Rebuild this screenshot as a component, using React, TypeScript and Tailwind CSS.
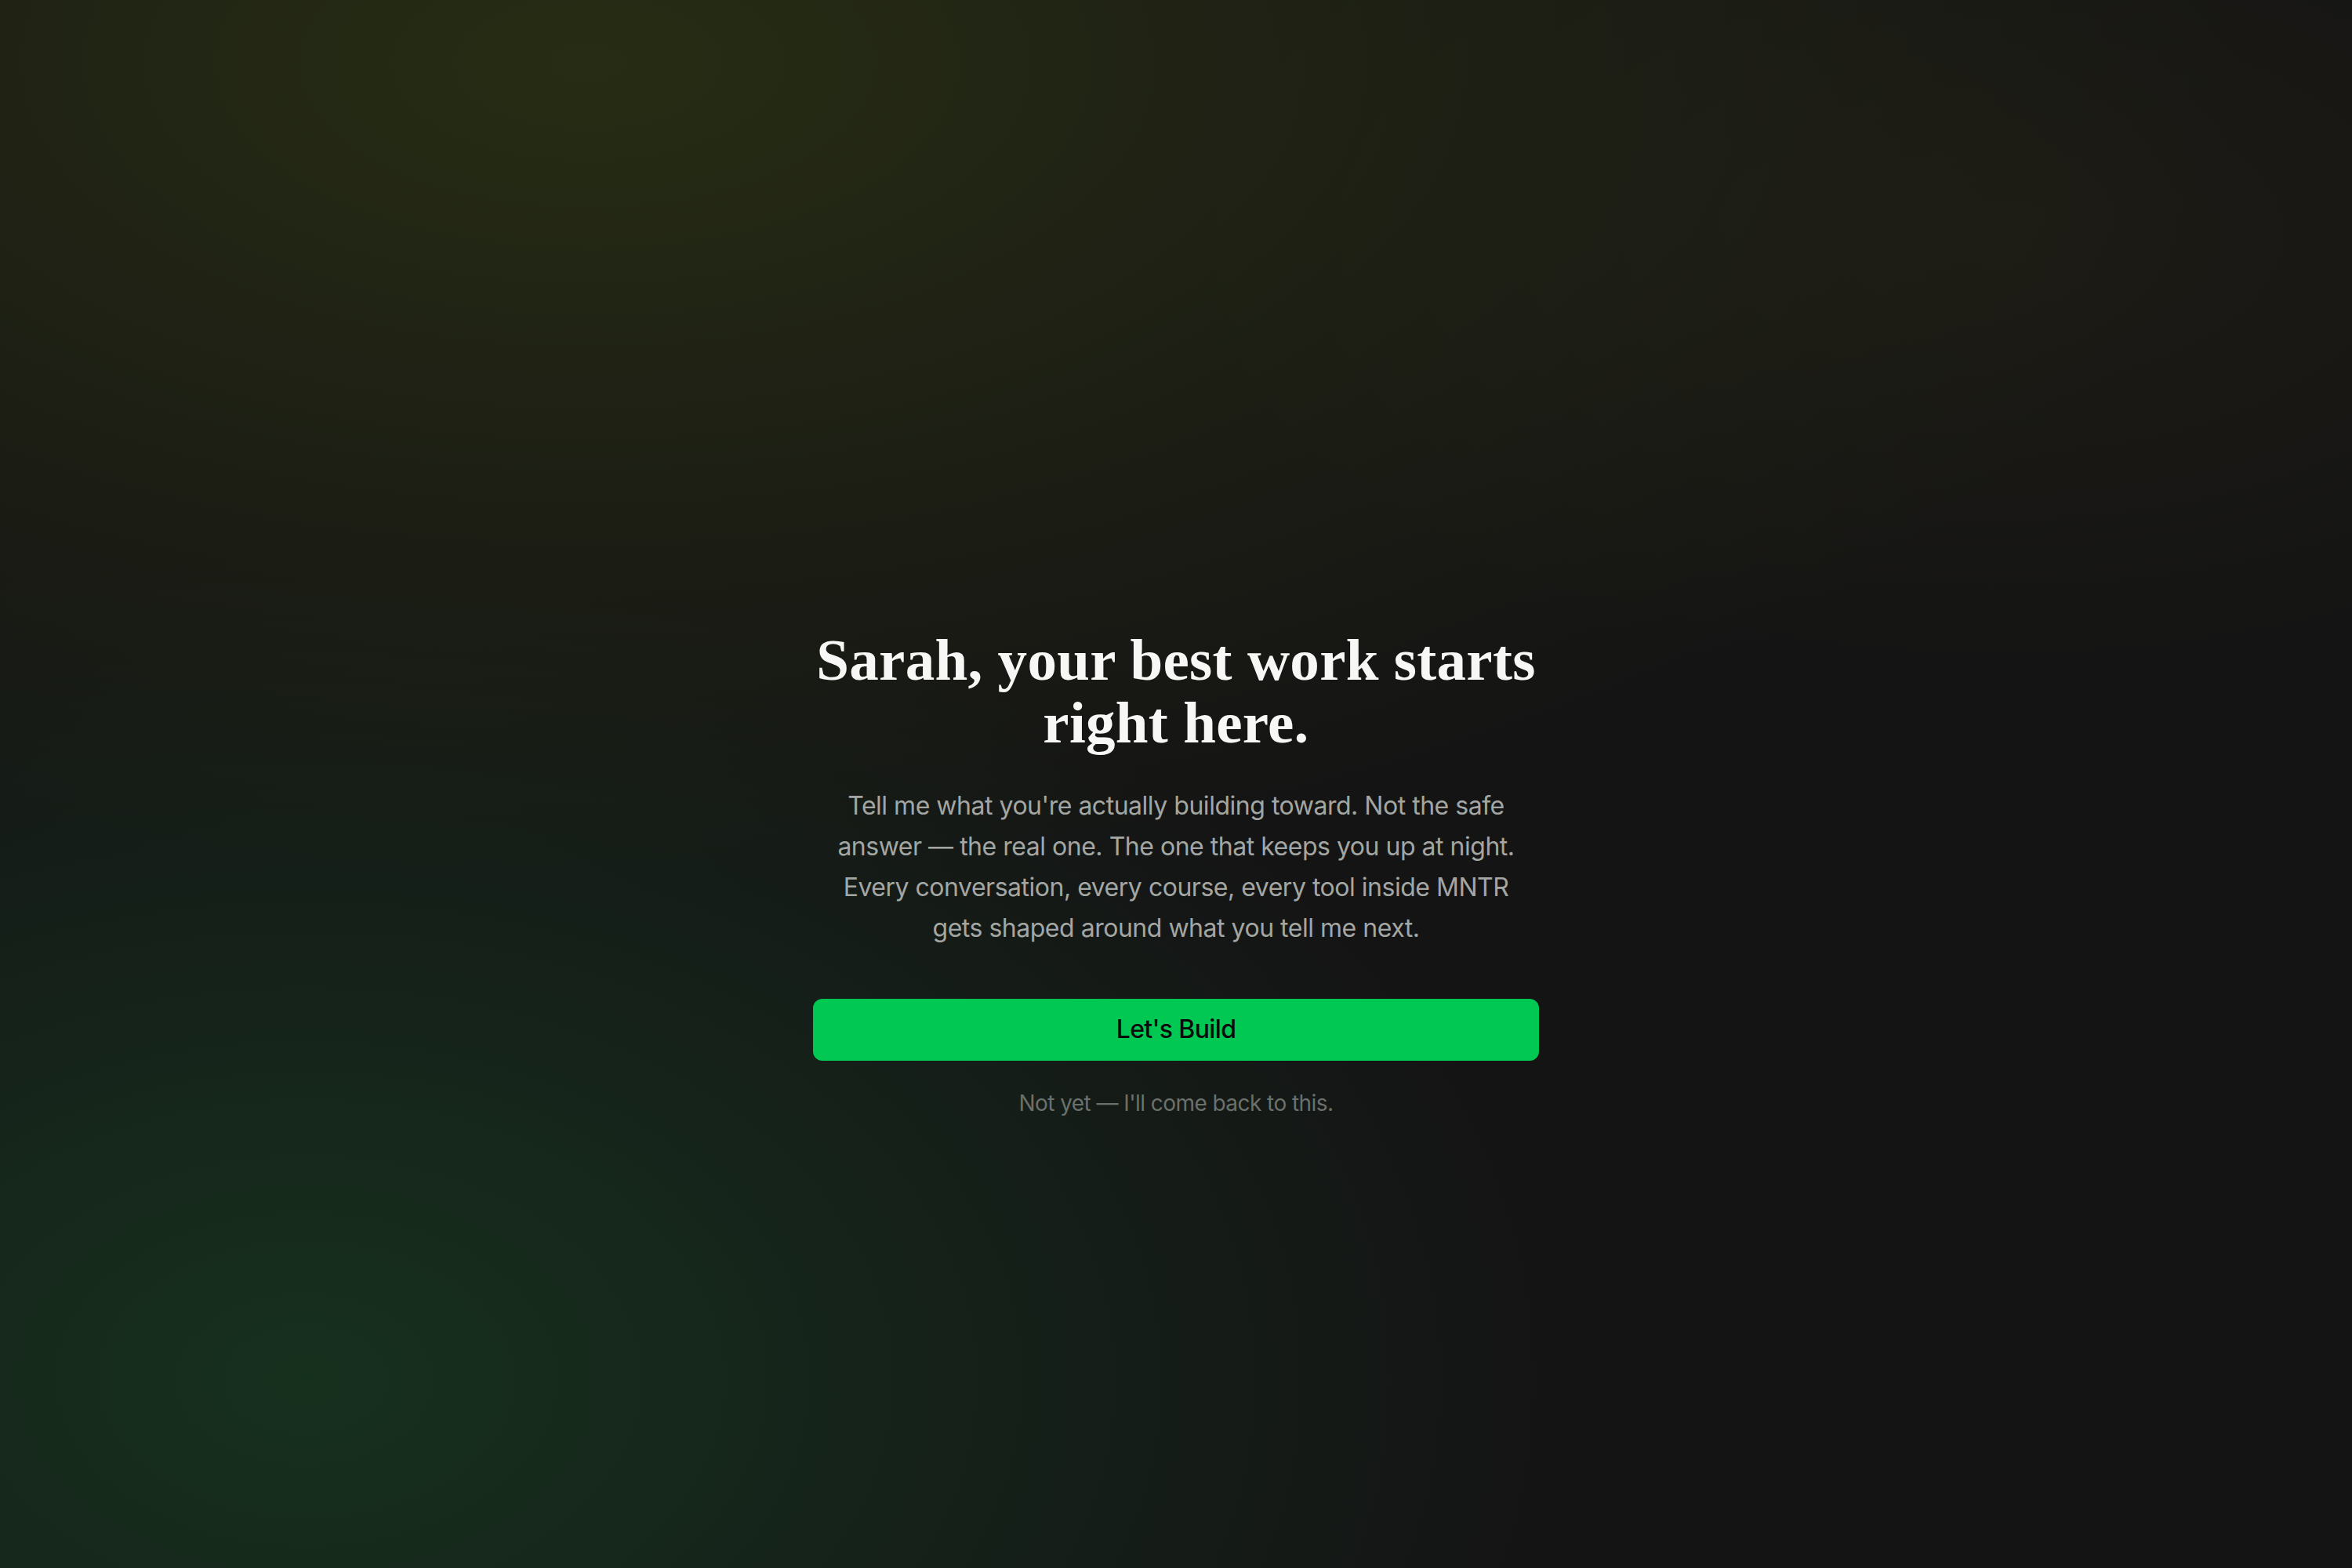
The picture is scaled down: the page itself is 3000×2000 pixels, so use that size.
export default function App() {
  return (
    <div className="relative min-h-[2000px] w-full bg-[#141414] bg-[radial-gradient(ellipse_2700px_1350px_at_25%_4%,rgba(40,46,20,0.95),rgba(36,40,20,0.55)_40%,transparent_78%),radial-gradient(ellipse_2100px_1400px_at_13%_88%,rgba(23,50,31,0.95),rgba(22,44,30,0.5)_42%,transparent_76%),radial-gradient(ellipse_1500px_800px_at_85%_15%,rgba(38,35,22,0.45),transparent_72%)]">
      <div className="flex min-h-[2000px] flex-col items-center justify-center pt-[228px]">
        <div className="flex w-[926px] flex-col items-center text-center">
          <h1 className="font-['Liberation_Serif',serif] text-[75px] font-bold leading-[80px] tracking-[0.3px] text-[#f7f7f5]">
            Sarah, your best work starts right here.
          </h1>
          <p className="mt-[40px] w-[890px] font-['Inter',sans-serif] text-[32px] leading-[52px] tracking-[-0.015em] text-[#a3a6a2]">
            Tell me what you're actually building toward. Not the safe answer — the real one. The one that keeps you up at night. Every conversation, every course, every tool inside MNTR gets shaped around what you tell me next.
          </p>
          <button className="mt-[64px] h-[79px] w-full rounded-[12px] bg-[#00c853] font-['Inter',sans-serif] text-[32px] font-medium tracking-[-0.02em] text-[#0a0a0a]">
            Let's Build
          </button>
          <button className="mt-[34px] font-['Inter',sans-serif] text-[28px] leading-[40px] tracking-[-0.02em] text-[#6b706b]">
            Not yet — I'll come back to this.
          </button>
        </div>
      </div>
    </div>
  );
}
